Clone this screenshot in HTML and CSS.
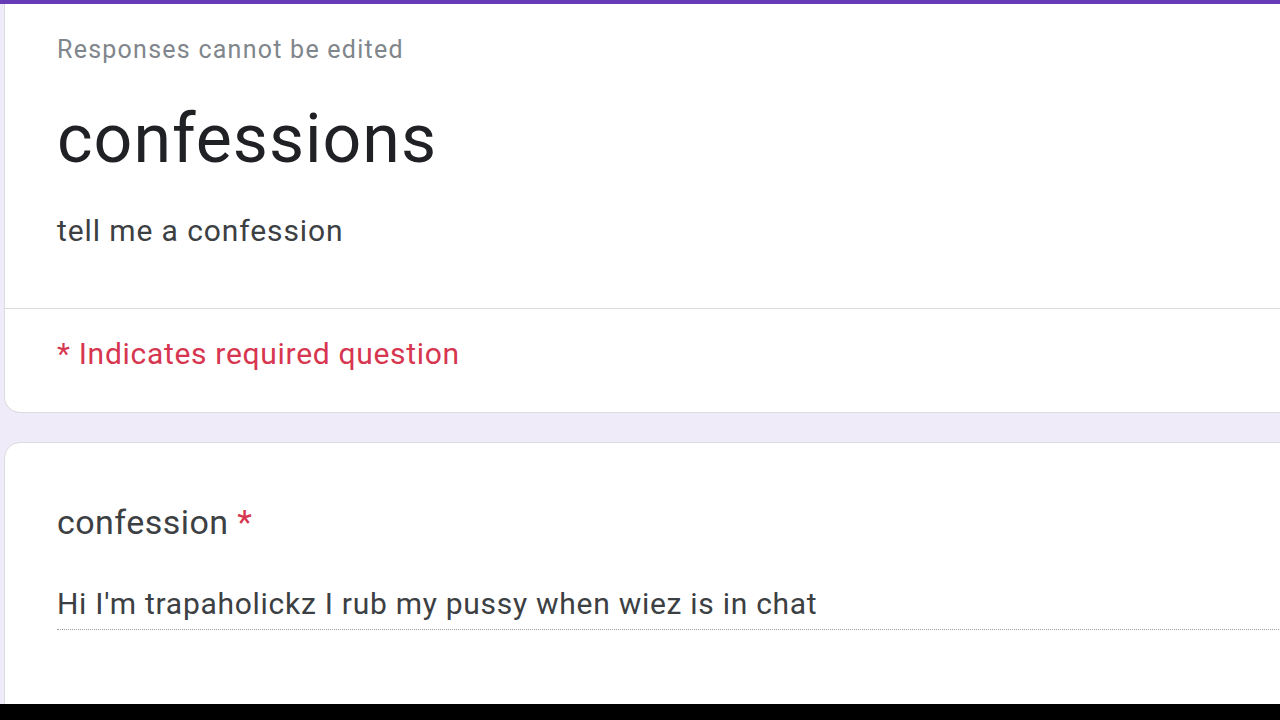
FILE: index.html
```html
<!DOCTYPE html>
<html lang="en">
<head>
    <meta charset="UTF-8">
    <meta name="viewport" content="width=device-width, initial-scale=1.0">
    <title>confessions</title>
    <link rel="stylesheet" href="styles.css">
</head>
<body>
    <div class="screen">
        <div class="accent-bar"></div>
        <div class="form-area">
            <div class="card header-card">
                <div class="header-main">
                    <div class="notice">Responses cannot be edited</div>
                    <h1 class="form-title">confessions</h1>
                    <div class="form-desc">tell me a confession</div>
                </div>
                <div class="required-note">* Indicates required question</div>
            </div>

            <div class="card question-card">
                <div class="question-title">confession <span class="star">*</span></div>
                <div class="answer">Hi I'm trapaholickz I rub my pussy when wiez is in chat</div>
            </div>
        </div>
    </div>
    <div class="letterbox"></div>
</body>
</html>
```

FILE: styles.css
```css
html, body {
    margin: 0;
    height: 100%;
}

body {
    font-family: Roboto, 'Liberation Sans', Arial, sans-serif;
    background-color: #f0ebf8;
    color: #202124;
    overflow: hidden;
    display: flex;
    flex-direction: column;
}

.screen {
    height: 704px;
    overflow: hidden;
    display: flex;
    flex-direction: column;
}

.accent-bar {
    height: 4px;
    background-color: #673ab7;
    flex-shrink: 0;
}

.form-area {
    padding-left: 4px;
    margin-right: -24px;
    display: flex;
    flex-direction: column;
    gap: 29px;
}

.card {
    background-color: #ffffff;
    border: 1px solid #dadce0;
}

.header-card {
    border-top: none;
    border-radius: 0 0 16px 16px;
}

.header-main {
    padding: 30px 52px 57px;
    border-bottom: 1px solid #dadce0;
}

.notice {
    font-size: 25px;
    line-height: 32px;
    color: #80868b;
    letter-spacing: 1.25px;
}

.form-title {
    margin: 33px 0 0;
    font-size: 68px;
    line-height: 80px;
    font-weight: 400;
    letter-spacing: 1px;
    color: #202124;
}

.form-desc {
    margin-top: 32px;
    font-size: 30px;
    line-height: 40px;
    letter-spacing: 0.9px;
    color: #3c4043;
}

.required-note {
    padding: 25px 52px 38px;
    font-size: 30px;
    line-height: 40px;
    letter-spacing: 0.7px;
    color: #d6364f;
}

.question-card {
    border-radius: 16px 16px 0 0;
    padding: 57px 0 0 52px;
    flex-grow: 1;
    min-height: 300px;
}

.question-title {
    font-size: 34px;
    line-height: 44px;
    letter-spacing: 0.45px;
    color: #3c4043;
}

.star {
    color: #d6364f;
}

.answer {
    margin-top: 40px;
    padding-bottom: 5px;
    font-size: 30px;
    line-height: 40px;
    letter-spacing: 0.72px;
    color: #3c4043;
    border-bottom: 1px dotted #9aa0a6;
}

.letterbox {
    height: 16px;
    background-color: #000000;
    flex-shrink: 0;
}
```
